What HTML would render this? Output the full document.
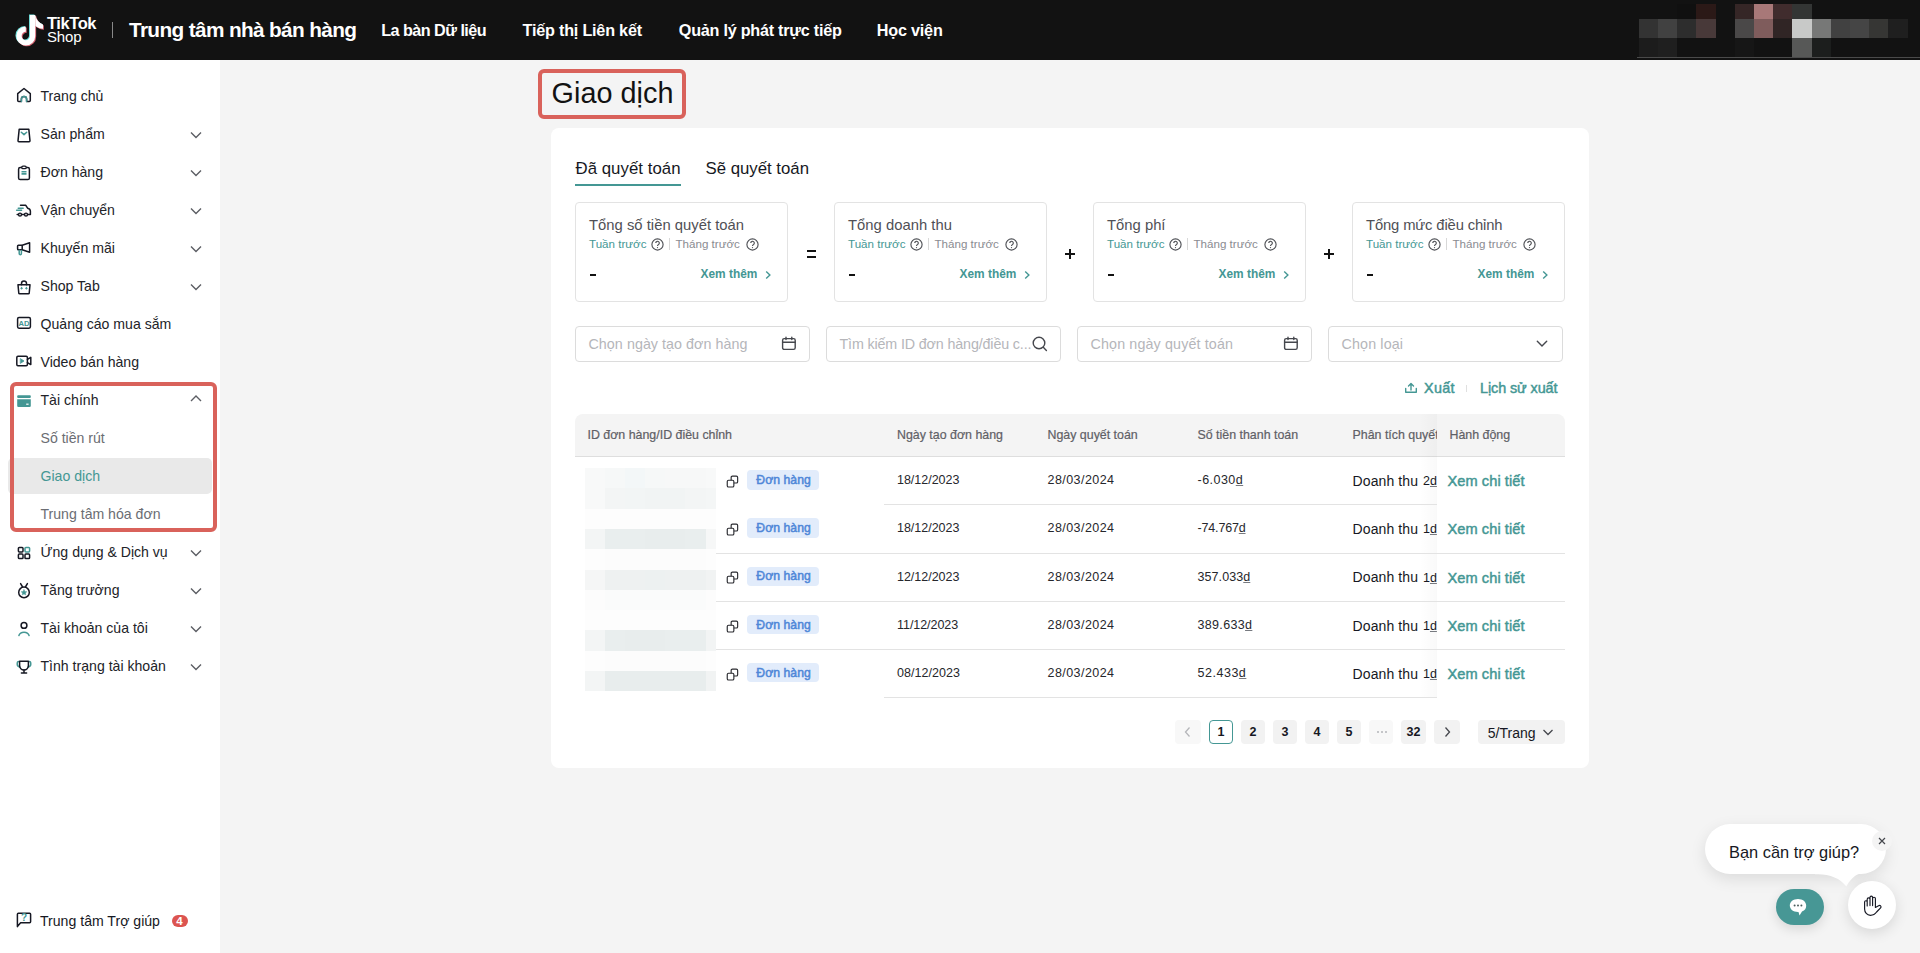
<!DOCTYPE html><html><head><meta charset="utf-8"><style>
html,body{margin:0;padding:0;width:1920px;height:953px;overflow:hidden;background:#f4f4f4;font-family:"Liberation Sans",sans-serif}
.t{position:absolute;white-space:nowrap;line-height:1}
.r{position:absolute}
svg.r{overflow:visible}
</style></head><body>
<div class="r" style="left:0px;top:0px;width:1920px;height:60px;background:#121212"></div>
<svg class="r" style="left:0.3px;top:0.8px" width="60" height="60" viewBox="0 0 60 60">
<defs><g id="tkn"><path d="M32.6 14 V35 A6.8 6.8 0 1 1 25.8 28.2" fill="none" stroke-width="5.3"/><path d="M35.2 14 C36.3 18.5 39 22 43 23.6 V27.8 C40.2 27.6 37.6 26.6 35.4 25 Z" stroke="none"/></g></defs>
<use href="#tkn" stroke="#6fe3df" fill="#6fe3df" transform="translate(-0.9,-0.6)"/>
<use href="#tkn" stroke="#d0606e" fill="#d0606e" transform="translate(0.9,0.9)"/>
<use href="#tkn" stroke="#fff" fill="#fff"/>
</svg>
<div class="t" style="left:47px;top:14.93px;font-size:16.5px;font-weight:700;color:#fff;letter-spacing:-0.431px;">TikTok</div>
<div class="t" style="left:47px;top:29.20px;font-size:15px;font-weight:400;color:#fff;letter-spacing:-0.182px;">Shop</div>
<div class="r" style="left:112px;top:22px;width:1px;height:16px;background:#888"></div>
<div class="t" style="left:129px;top:19.69px;font-size:20.8px;font-weight:700;color:#fff;letter-spacing:-0.642px;">Trung tâm nhà bán hàng</div>
<div class="t" style="left:381.2px;top:22.29px;font-size:16.2px;font-weight:700;color:#fff;letter-spacing:-0.536px;">La bàn Dữ liệu</div>
<div class="t" style="left:522.6px;top:22.29px;font-size:16.2px;font-weight:700;color:#fff;letter-spacing:-0.215px;">Tiếp thị Liên kết</div>
<div class="t" style="left:678.8px;top:22.29px;font-size:16.2px;font-weight:700;color:#fff;letter-spacing:-0.249px;">Quản lý phát trực tiếp</div>
<div class="t" style="left:876.8px;top:22.29px;font-size:16.2px;font-weight:700;color:#fff;letter-spacing:-0.212px;">Học viện</div>
<div class="r" style="left:1677.2px;top:4px;width:19.3px;height:15px;background:#101010"></div>
<div class="r" style="left:1696.3px;top:4px;width:19.3px;height:15px;background:#2b1917"></div>
<div class="r" style="left:1734.8px;top:4px;width:19.3px;height:15px;background:#352626"></div>
<div class="r" style="left:1754.0px;top:4px;width:19.3px;height:15px;background:#a87878"></div>
<div class="r" style="left:1773.2px;top:4px;width:19.3px;height:15px;background:#402c2d"></div>
<div class="r" style="left:1792.3px;top:4px;width:19.3px;height:15px;background:#333534"></div>
<div class="r" style="left:1638.8px;top:19px;width:19.3px;height:19px;background:#333333"></div>
<div class="r" style="left:1658.0px;top:19px;width:19.3px;height:19px;background:#414141"></div>
<div class="r" style="left:1677.2px;top:19px;width:19.3px;height:19px;background:#2d2d2d"></div>
<div class="r" style="left:1696.3px;top:19px;width:19.3px;height:19px;background:#483939"></div>
<div class="r" style="left:1734.8px;top:19px;width:19.3px;height:19px;background:#4a4848"></div>
<div class="r" style="left:1754.0px;top:19px;width:19.3px;height:19px;background:#7f5c5c"></div>
<div class="r" style="left:1773.2px;top:19px;width:19.3px;height:19px;background:#302525"></div>
<div class="r" style="left:1792.3px;top:19px;width:19.3px;height:19px;background:#c8c9c8"></div>
<div class="r" style="left:1811.5px;top:19px;width:19.3px;height:19px;background:#777877"></div>
<div class="r" style="left:1830.8px;top:19px;width:19.3px;height:19px;background:#414141"></div>
<div class="r" style="left:1850.0px;top:19px;width:19.3px;height:19px;background:#454545"></div>
<div class="r" style="left:1869.2px;top:19px;width:19.3px;height:19px;background:#363634"></div>
<div class="r" style="left:1888.3px;top:19px;width:19.3px;height:19px;background:#1f1f1f"></div>
<div class="r" style="left:1638.8px;top:38px;width:19.3px;height:19px;background:#1c1c1c"></div>
<div class="r" style="left:1658.0px;top:38px;width:19.3px;height:19px;background:#1f1f1f"></div>
<div class="r" style="left:1734.8px;top:38px;width:19.3px;height:19px;background:#161616"></div>
<div class="r" style="left:1792.3px;top:38px;width:19.3px;height:19px;background:#575857"></div>
<div class="r" style="left:1811.5px;top:38px;width:19.3px;height:19px;background:#1c1e1d"></div>
<div class="r" style="left:1637px;top:57px;width:283px;height:1px;background:#4a4a4a"></div>
<div class="r" style="left:0px;top:60px;width:220px;height:893px;background:#fff"></div>
<!--SIDEBAR-->
<div class="r" style="left:8px;top:458px;width:203.5px;height:36px;background:#e9e9e9;border-radius:5px"></div>
<div class="t" style="left:40.5px;top:89.46px;font-size:14.1px;font-weight:400;color:#222328;">Trang chủ</div>
<div class="t" style="left:40.5px;top:127.46px;font-size:14.1px;font-weight:400;color:#222328;">Sản phẩm</div>
<svg class="r" style="left:189px;top:131.4px" width="14" height="9" viewBox="0 0 14 9"><path d="M2 1.5 L7 6.5 L12 1.5" fill="none" stroke="#5c5e64" stroke-width="1.4"/></svg>
<div class="t" style="left:40.5px;top:165.46px;font-size:14.1px;font-weight:400;color:#222328;">Đơn hàng</div>
<svg class="r" style="left:189px;top:169.4px" width="14" height="9" viewBox="0 0 14 9"><path d="M2 1.5 L7 6.5 L12 1.5" fill="none" stroke="#5c5e64" stroke-width="1.4"/></svg>
<div class="t" style="left:40.5px;top:203.46px;font-size:14.1px;font-weight:400;color:#222328;">Vận chuyển</div>
<svg class="r" style="left:189px;top:207.4px" width="14" height="9" viewBox="0 0 14 9"><path d="M2 1.5 L7 6.5 L12 1.5" fill="none" stroke="#5c5e64" stroke-width="1.4"/></svg>
<div class="t" style="left:40.5px;top:241.46px;font-size:14.1px;font-weight:400;color:#222328;">Khuyến mãi</div>
<svg class="r" style="left:189px;top:245.4px" width="14" height="9" viewBox="0 0 14 9"><path d="M2 1.5 L7 6.5 L12 1.5" fill="none" stroke="#5c5e64" stroke-width="1.4"/></svg>
<div class="t" style="left:40.5px;top:279.46px;font-size:14.1px;font-weight:400;color:#222328;">Shop Tab</div>
<svg class="r" style="left:189px;top:283.4px" width="14" height="9" viewBox="0 0 14 9"><path d="M2 1.5 L7 6.5 L12 1.5" fill="none" stroke="#5c5e64" stroke-width="1.4"/></svg>
<div class="t" style="left:40.5px;top:317.46px;font-size:14.1px;font-weight:400;color:#222328;">Quảng cáo mua sắm</div>
<div class="t" style="left:40.5px;top:355.46px;font-size:14.1px;font-weight:400;color:#222328;">Video bán hàng</div>
<div class="t" style="left:40.5px;top:393.46px;font-size:14.1px;font-weight:400;color:#222328;">Tài chính</div>
<svg class="r" style="left:189px;top:394.4px" width="14" height="9" viewBox="0 0 14 9"><path d="M2 7 L7 2 L12 7" fill="none" stroke="#5c5e64" stroke-width="1.4"/></svg>
<div class="t" style="left:40.5px;top:431.46px;font-size:14.1px;font-weight:400;color:#6b6d73;">Số tiền rút</div>
<div class="t" style="left:40.5px;top:469.46px;font-size:14.1px;font-weight:400;color:#449794;">Giao dịch</div>
<div class="t" style="left:40.5px;top:507.46px;font-size:14.1px;font-weight:400;color:#6b6d73;">Trung tâm hóa đơn</div>
<div class="t" style="left:40.5px;top:545.46px;font-size:14.1px;font-weight:400;color:#222328;">Ứng dụng &amp; Dịch vụ</div>
<svg class="r" style="left:189px;top:549.4px" width="14" height="9" viewBox="0 0 14 9"><path d="M2 1.5 L7 6.5 L12 1.5" fill="none" stroke="#5c5e64" stroke-width="1.4"/></svg>
<div class="t" style="left:40.5px;top:583.46px;font-size:14.1px;font-weight:400;color:#222328;">Tăng trưởng</div>
<svg class="r" style="left:189px;top:587.4px" width="14" height="9" viewBox="0 0 14 9"><path d="M2 1.5 L7 6.5 L12 1.5" fill="none" stroke="#5c5e64" stroke-width="1.4"/></svg>
<div class="t" style="left:40.5px;top:621.46px;font-size:14.1px;font-weight:400;color:#222328;">Tài khoản của tôi</div>
<svg class="r" style="left:189px;top:625.4px" width="14" height="9" viewBox="0 0 14 9"><path d="M2 1.5 L7 6.5 L12 1.5" fill="none" stroke="#5c5e64" stroke-width="1.4"/></svg>
<div class="t" style="left:40.5px;top:659.46px;font-size:14.1px;font-weight:400;color:#222328;">Tình trạng tài khoản</div>
<svg class="r" style="left:189px;top:663.4px" width="14" height="9" viewBox="0 0 14 9"><path d="M2 1.5 L7 6.5 L12 1.5" fill="none" stroke="#5c5e64" stroke-width="1.4"/></svg>
<svg class="r" style="left:16px;top:87px" width="16" height="16" viewBox="0 0 16 16" fill="none" stroke-linecap="round" stroke-linejoin="round"><path d="M1.7 6.6 L8 1.5 L14.3 6.6 V13.6 a1 1 0 0 1 -1 1 H10.6 V12 a2.6 2.6 0 0 0 -5.2 0 V14.6 H2.7 a1 1 0 0 1 -1 -1 Z" stroke="#161823" stroke-width="1.5"/><path d="M5.4 14.6 V12 a2.6 2.6 0 0 1 5.2 0 V14.6" stroke="#449794" stroke-width="1.5"/></svg>
<svg class="r" style="left:16px;top:127px" width="16" height="16" viewBox="0 0 16 16" fill="none" stroke-linecap="round" stroke-linejoin="round"><path d="M3.2 2.2 H12.8 L14 13.8 a0.9 0.9 0 0 1 -0.9 0.9 H2.9 a0.9 0.9 0 0 1 -0.9 -0.9 Z" stroke="#161823" stroke-width="1.5"/><path d="M5.3 5.2 L8 7.6 L10.7 5.2" stroke="#449794" stroke-width="1.5"/></svg>
<svg class="r" style="left:16px;top:165px" width="16" height="16" viewBox="0 0 16 16" fill="none" stroke-linecap="round" stroke-linejoin="round"><rect x="2.6" y="2.6" width="10.8" height="12" rx="1.6" stroke="#161823" stroke-width="1.5"/><rect x="5.8" y="1.2" width="4.4" height="2.4" rx="1.2" fill="#fff" stroke="#161823" stroke-width="1.3"/><path d="M5.5 6.8 H10.5 M5.5 8.9 H10.5" stroke="#449794" stroke-width="1.6" stroke-linecap="butt"/></svg>
<svg class="r" style="left:15px;top:203px" width="17" height="15" viewBox="0 0 17 15" fill="none" stroke-linecap="round" stroke-linejoin="round"><path d="M5.5 2.3 H10.8 L12.6 5.2 C14.4 5.6 15.4 6.6 15.4 8.2 V11.4 H12.7 M9.4 11.4 H6.7" stroke="#161823" stroke-width="1.5"/><path d="M3.4 11.4 H2.2" stroke="#161823" stroke-width="1.5"/><circle cx="5" cy="11.6" r="1.5" stroke="#161823" stroke-width="1.4"/><circle cx="11" cy="11.6" r="1.5" stroke="#161823" stroke-width="1.4"/><path d="M3.2 5.2 H8.2 M1.6 7.2 H6.6" stroke="#449794" stroke-width="1.4"/></svg>
<svg class="r" style="left:16px;top:241px" width="16" height="16" viewBox="0 0 16 16" fill="none" stroke-linecap="round" stroke-linejoin="round"><rect x="1.6" y="4.2" width="4.6" height="4.6" rx="0.8" stroke="#161823" stroke-width="1.5"/><path d="M6.2 4.2 L13.6 1.8 V11.2 L6.2 8.8" stroke="#161823" stroke-width="1.5"/><path d="M3.2 9.2 V12.6 a1.1 1.1 0 0 0 2.2 0 V9.4" stroke="#449794" stroke-width="1.5"/></svg>
<svg class="r" style="left:16px;top:279px" width="16" height="16" viewBox="0 0 16 16" fill="none" stroke-linecap="round" stroke-linejoin="round"><path d="M2 5.8 H14 L13.2 14.2 a0.8 0.8 0 0 1 -0.8 0.6 H3.6 a0.8 0.8 0 0 1 -0.8 -0.6 Z" stroke="#161823" stroke-width="1.5"/><path d="M5.5 5.8 V4.4 a2.5 2.5 0 0 1 5 0 V5.8" stroke="#161823" stroke-width="1.5"/><path d="M4.8 9.2 H6.4 M5.6 8.4 V10 M9.6 9.2 H11.2 M10.4 8.4 V10" stroke="#449794" stroke-width="1.1"/></svg>
<svg class="r" style="left:16px;top:316px" width="16" height="14" viewBox="0 0 16 14" fill="none" stroke-linecap="round" stroke-linejoin="round"><rect x="1.6" y="1.6" width="12.8" height="10.6" rx="1.4" stroke="#161823" stroke-width="1.5"/><text x="8" y="10.3" text-anchor="middle" font-family="Liberation Sans" font-weight="700" font-size="7.6" fill="#449794" stroke="none">AD</text></svg>
<svg class="r" style="left:15px;top:354px" width="18" height="14" viewBox="0 0 18 14" fill="none" stroke-linecap="round" stroke-linejoin="round"><rect x="1.8" y="2.2" width="10.6" height="9.6" rx="1.2" stroke="#161823" stroke-width="1.5"/><path d="M12.4 5.4 L15.8 3.4 V10.6 L12.4 8.6" stroke="#161823" stroke-width="1.5"/><path d="M5.6 4.8 L9 7 L5.6 9.2 Z" fill="#449794" stroke="#449794" stroke-width="0.8"/></svg>
<svg class="r" style="left:16px;top:394px" width="16" height="14" viewBox="0 0 16 14" fill="none" stroke-linecap="round" stroke-linejoin="round"><rect x="1.2" y="1.2" width="13.6" height="2.8" rx="0.9" fill="#449794"/><path d="M1.2 5.2 H14.8 V11.8 a1.2 1.2 0 0 1 -1.2 1.2 H2.4 a1.2 1.2 0 0 1 -1.2 -1.2 Z" fill="#449794"/><path d="M10.2 10.2 H12.6" stroke="#fff" stroke-width="1.2" stroke-linecap="butt"/></svg>
<svg class="r" style="left:16px;top:545px" width="16" height="16" viewBox="0 0 16 16" fill="none" stroke-linecap="round" stroke-linejoin="round"><rect x="2.4" y="2.4" width="4.6" height="4.6" rx="0.9" stroke="#161823" stroke-width="1.5"/><rect x="9" y="2.4" width="4.6" height="4.6" rx="0.9" stroke="#449794" stroke-width="1.5"/><rect x="2.4" y="9" width="4.6" height="4.6" rx="0.9" stroke="#161823" stroke-width="1.5"/><rect x="9" y="9" width="4.6" height="4.6" rx="0.9" stroke="#161823" stroke-width="1.5"/></svg>
<svg class="r" style="left:16px;top:582px" width="16" height="17" viewBox="0 0 16 17" fill="none" stroke-linecap="round" stroke-linejoin="round"><circle cx="8" cy="10.4" r="5.3" stroke="#161823" stroke-width="1.5"/><path d="M4.6 1.6 L6.6 5 M11.4 1.6 L9.4 5" stroke="#161823" stroke-width="1.5"/><path d="M8 7.6 L8.9 9.5 L10.9 9.7 L9.4 11 L9.8 13 L8 12 L6.2 13 L6.6 11 L5.1 9.7 L7.1 9.5 Z" fill="#449794" stroke="#449794" stroke-width="0.4"/></svg>
<svg class="r" style="left:16px;top:621px" width="16" height="16" viewBox="0 0 16 16" fill="none" stroke-linecap="round" stroke-linejoin="round"><circle cx="8" cy="4.4" r="2.9" stroke="#161823" stroke-width="1.5"/><path d="M2.9 14.6 a5.3 4.6 0 0 1 10.2 0" stroke="#449794" stroke-width="1.5"/></svg>
<svg class="r" style="left:16px;top:659px" width="16" height="16" viewBox="0 0 16 16" fill="none" stroke-linecap="round" stroke-linejoin="round"><path d="M2.6 2.6 C1.4 2.6 1.2 3.6 1.2 5 C1.2 6.4 1.6 7.6 3.8 8 M13.4 2.6 C14.6 2.6 14.8 3.6 14.8 5 C14.8 6.4 14.4 7.6 12.2 8" stroke="#449794" stroke-width="1.5"/><path d="M3.6 2.2 H12.4 V6.6 a4.4 4.4 0 0 1 -8.8 0 Z" stroke="#161823" stroke-width="1.5"/><path d="M8 11 V13.6 M5.4 14 H10.6" stroke="#161823" stroke-width="1.5"/></svg>
<svg class="r" style="left:16px;top:912px" width="16" height="16" viewBox="0 0 16 16" fill="none" stroke-linecap="round" stroke-linejoin="round"><path d="M1.4 14.6 V2.2 a1 1 0 0 1 1 -1 H13.6 a1 1 0 0 1 1 1 V9.8 a1 1 0 0 1 -1 1 H4.6 Z" stroke="#161823" stroke-width="1.5"/><text x="8" y="8.8" text-anchor="middle" font-family="Liberation Sans" font-weight="700" font-size="10" fill="#449794" stroke="none">?</text></svg>
<div class="r" style="left:10px;top:382px;width:207px;height:150px;border:4px solid #d9625b;border-radius:6px;box-sizing:border-box"></div>
<!--HELP-->
<div class="t" style="left:40px;top:914.06px;font-size:14.1px;font-weight:400;color:#161823;">Trung tâm Trợ giúp</div>
<div class="r" style="left:172px;top:915px;width:16px;height:12px;background:#dc5450;border-radius:6px"></div>
<div class="t" style="left:176.2px;top:915.57px;font-size:11.5px;font-weight:700;color:#fff;">4</div>
<div class="r" style="left:220px;top:60px;width:1700px;height:893px;background:#f4f4f4"></div>
<div class="r" style="left:538px;top:69px;width:148px;height:50px;border:4px solid #d9625b;border-radius:6px;box-sizing:border-box"></div>
<div class="t" style="left:551.5px;top:78.62px;font-size:28.8px;font-weight:400;color:#121212;letter-spacing:0.043px;">Giao dịch</div>
<div class="r" style="left:551px;top:128px;width:1038px;height:640px;background:#fff;border-radius:8px"></div>
<div class="t" style="left:575.5px;top:161.28px;font-size:16.8px;font-weight:400;color:#161823;letter-spacing:0.042px;">Đã quyết toán</div>
<div class="t" style="left:705.5px;top:161.28px;font-size:16.8px;font-weight:400;color:#161823;letter-spacing:-0.007px;">Sẽ quyết toán</div>
<div class="r" style="left:575px;top:184px;width:106px;height:2px;background:#449794"></div>
<div class="r" style="left:575px;top:202px;width:213px;height:100px;border:1px solid #e3e3e3;border-radius:4px;box-sizing:border-box"></div>
<div class="t" style="left:589px;top:218.07px;font-size:14.8px;font-weight:400;color:#4f5056;letter-spacing:0.016px;">Tổng số tiền quyết toán</div>
<div class="t" style="left:589px;top:237.88px;font-size:11.6px;font-weight:400;color:#449794;">Tuần trước</div>
<svg class="r" style="left:651px;top:237.5px" width="13" height="13" viewBox="0 0 13 13"><circle cx="6.5" cy="6.5" r="5.6" fill="none" stroke="#505257" stroke-width="1.15"/><path d="M4.7 5.1 a1.8 1.8 0 1 1 2.6 1.6 c-.6.3-.8.6-.8 1.3" fill="none" stroke="#505257" stroke-width="1.15"/><circle cx="6.5" cy="9.6" r=".65" fill="#505257"/></svg>
<div class="r" style="left:669px;top:238px;width:1px;height:12px;background:#d8d8d8"></div>
<div class="t" style="left:675.5px;top:237.88px;font-size:11.6px;font-weight:400;color:#8a8b91;">Tháng trước</div>
<svg class="r" style="left:746px;top:237.5px" width="13" height="13" viewBox="0 0 13 13"><circle cx="6.5" cy="6.5" r="5.6" fill="none" stroke="#505257" stroke-width="1.15"/><path d="M4.7 5.1 a1.8 1.8 0 1 1 2.6 1.6 c-.6.3-.8.6-.8 1.3" fill="none" stroke="#505257" stroke-width="1.15"/><circle cx="6.5" cy="9.6" r=".65" fill="#505257"/></svg>
<div class="r" style="left:589.5px;top:273.5px;width:6px;height:2.2px;background:#121212"></div>
<div class="t" style="left:700.5px;top:268.63px;font-size:11.9px;font-weight:700;color:#449794;">Xem thêm</div>
<svg class="r" style="left:764px;top:269.5px" width="8" height="11" viewBox="0 0 8 11"><path d="M2.2 1.4 L5.9 5 L2.2 8.6" fill="none" stroke="#449794" stroke-width="1.4"/></svg>
<div class="r" style="left:834px;top:202px;width:213px;height:100px;border:1px solid #e3e3e3;border-radius:4px;box-sizing:border-box"></div>
<div class="t" style="left:848px;top:218.07px;font-size:14.8px;font-weight:400;color:#4f5056;letter-spacing:0.025px;">Tổng doanh thu</div>
<div class="t" style="left:848px;top:237.88px;font-size:11.6px;font-weight:400;color:#449794;">Tuần trước</div>
<svg class="r" style="left:910px;top:237.5px" width="13" height="13" viewBox="0 0 13 13"><circle cx="6.5" cy="6.5" r="5.6" fill="none" stroke="#505257" stroke-width="1.15"/><path d="M4.7 5.1 a1.8 1.8 0 1 1 2.6 1.6 c-.6.3-.8.6-.8 1.3" fill="none" stroke="#505257" stroke-width="1.15"/><circle cx="6.5" cy="9.6" r=".65" fill="#505257"/></svg>
<div class="r" style="left:928px;top:238px;width:1px;height:12px;background:#d8d8d8"></div>
<div class="t" style="left:934.5px;top:237.88px;font-size:11.6px;font-weight:400;color:#8a8b91;">Tháng trước</div>
<svg class="r" style="left:1005px;top:237.5px" width="13" height="13" viewBox="0 0 13 13"><circle cx="6.5" cy="6.5" r="5.6" fill="none" stroke="#505257" stroke-width="1.15"/><path d="M4.7 5.1 a1.8 1.8 0 1 1 2.6 1.6 c-.6.3-.8.6-.8 1.3" fill="none" stroke="#505257" stroke-width="1.15"/><circle cx="6.5" cy="9.6" r=".65" fill="#505257"/></svg>
<div class="r" style="left:848.5px;top:273.5px;width:6px;height:2.2px;background:#121212"></div>
<div class="t" style="left:959.5px;top:268.63px;font-size:11.9px;font-weight:700;color:#449794;">Xem thêm</div>
<svg class="r" style="left:1023px;top:269.5px" width="8" height="11" viewBox="0 0 8 11"><path d="M2.2 1.4 L5.9 5 L2.2 8.6" fill="none" stroke="#449794" stroke-width="1.4"/></svg>
<div class="r" style="left:1093px;top:202px;width:213px;height:100px;border:1px solid #e3e3e3;border-radius:4px;box-sizing:border-box"></div>
<div class="t" style="left:1107px;top:218.07px;font-size:14.8px;font-weight:400;color:#4f5056;letter-spacing:0.011px;">Tổng phí</div>
<div class="t" style="left:1107px;top:237.88px;font-size:11.6px;font-weight:400;color:#449794;">Tuần trước</div>
<svg class="r" style="left:1169px;top:237.5px" width="13" height="13" viewBox="0 0 13 13"><circle cx="6.5" cy="6.5" r="5.6" fill="none" stroke="#505257" stroke-width="1.15"/><path d="M4.7 5.1 a1.8 1.8 0 1 1 2.6 1.6 c-.6.3-.8.6-.8 1.3" fill="none" stroke="#505257" stroke-width="1.15"/><circle cx="6.5" cy="9.6" r=".65" fill="#505257"/></svg>
<div class="r" style="left:1187px;top:238px;width:1px;height:12px;background:#d8d8d8"></div>
<div class="t" style="left:1193.5px;top:237.88px;font-size:11.6px;font-weight:400;color:#8a8b91;">Tháng trước</div>
<svg class="r" style="left:1264px;top:237.5px" width="13" height="13" viewBox="0 0 13 13"><circle cx="6.5" cy="6.5" r="5.6" fill="none" stroke="#505257" stroke-width="1.15"/><path d="M4.7 5.1 a1.8 1.8 0 1 1 2.6 1.6 c-.6.3-.8.6-.8 1.3" fill="none" stroke="#505257" stroke-width="1.15"/><circle cx="6.5" cy="9.6" r=".65" fill="#505257"/></svg>
<div class="r" style="left:1107.5px;top:273.5px;width:6px;height:2.2px;background:#121212"></div>
<div class="t" style="left:1218.5px;top:268.63px;font-size:11.9px;font-weight:700;color:#449794;">Xem thêm</div>
<svg class="r" style="left:1282px;top:269.5px" width="8" height="11" viewBox="0 0 8 11"><path d="M2.2 1.4 L5.9 5 L2.2 8.6" fill="none" stroke="#449794" stroke-width="1.4"/></svg>
<div class="r" style="left:1352px;top:202px;width:213px;height:100px;border:1px solid #e3e3e3;border-radius:4px;box-sizing:border-box"></div>
<div class="t" style="left:1366px;top:218.07px;font-size:14.8px;font-weight:400;color:#4f5056;letter-spacing:-0.141px;">Tổng mức điều chỉnh</div>
<div class="t" style="left:1366px;top:237.88px;font-size:11.6px;font-weight:400;color:#449794;">Tuần trước</div>
<svg class="r" style="left:1428px;top:237.5px" width="13" height="13" viewBox="0 0 13 13"><circle cx="6.5" cy="6.5" r="5.6" fill="none" stroke="#505257" stroke-width="1.15"/><path d="M4.7 5.1 a1.8 1.8 0 1 1 2.6 1.6 c-.6.3-.8.6-.8 1.3" fill="none" stroke="#505257" stroke-width="1.15"/><circle cx="6.5" cy="9.6" r=".65" fill="#505257"/></svg>
<div class="r" style="left:1446px;top:238px;width:1px;height:12px;background:#d8d8d8"></div>
<div class="t" style="left:1452.5px;top:237.88px;font-size:11.6px;font-weight:400;color:#8a8b91;">Tháng trước</div>
<svg class="r" style="left:1523px;top:237.5px" width="13" height="13" viewBox="0 0 13 13"><circle cx="6.5" cy="6.5" r="5.6" fill="none" stroke="#505257" stroke-width="1.15"/><path d="M4.7 5.1 a1.8 1.8 0 1 1 2.6 1.6 c-.6.3-.8.6-.8 1.3" fill="none" stroke="#505257" stroke-width="1.15"/><circle cx="6.5" cy="9.6" r=".65" fill="#505257"/></svg>
<div class="r" style="left:1366.5px;top:273.5px;width:6px;height:2.2px;background:#121212"></div>
<div class="t" style="left:1477.5px;top:268.63px;font-size:11.9px;font-weight:700;color:#449794;">Xem thêm</div>
<svg class="r" style="left:1541px;top:269.5px" width="8" height="11" viewBox="0 0 8 11"><path d="M2.2 1.4 L5.9 5 L2.2 8.6" fill="none" stroke="#449794" stroke-width="1.4"/></svg>
<div class="r" style="left:806.5px;top:250px;width:9px;height:2.2px;background:#121212"></div><div class="r" style="left:806.5px;top:255.5px;width:9px;height:2.2px;background:#121212"></div>
<div class="r" style="left:1065px;top:253px;width:10px;height:2px;background:#121212"></div>
<div class="r" style="left:1069px;top:249px;width:2px;height:10px;background:#121212"></div>
<div class="r" style="left:1324px;top:253px;width:10px;height:2px;background:#121212"></div>
<div class="r" style="left:1328px;top:249px;width:2px;height:10px;background:#121212"></div>
<div class="r" style="left:575px;top:326px;width:235px;height:36px;border:1px solid #dcdcdc;border-radius:4px;box-sizing:border-box"></div>
<div class="t" style="left:588.5px;top:336.70px;font-size:14.3px;font-weight:400;color:#b5b6ba;letter-spacing:0.046px;">Chọn ngày tạo đơn hàng</div>
<div class="r" style="left:826px;top:326px;width:235px;height:36px;border:1px solid #dcdcdc;border-radius:4px;box-sizing:border-box"></div>
<div class="t" style="left:839.5px;top:336.70px;font-size:14.3px;font-weight:400;color:#b5b6ba;letter-spacing:-0.142px;">Tìm kiếm ID đơn hàng/điều c...</div>
<div class="r" style="left:1077px;top:326px;width:235px;height:36px;border:1px solid #dcdcdc;border-radius:4px;box-sizing:border-box"></div>
<div class="t" style="left:1090.5px;top:336.70px;font-size:14.3px;font-weight:400;color:#b5b6ba;letter-spacing:0.137px;">Chọn ngày quyết toán</div>
<div class="r" style="left:1328px;top:326px;width:235px;height:36px;border:1px solid #dcdcdc;border-radius:4px;box-sizing:border-box"></div>
<div class="t" style="left:1341.5px;top:336.70px;font-size:14.3px;font-weight:400;color:#b5b6ba;letter-spacing:0.137px;">Chọn loại</div>
<svg class="r" style="left:781px;top:336px" width="16" height="15" viewBox="0 0 16 15" fill="none" stroke-linecap="round" stroke-linejoin="round"><rect x="1.6" y="2.6" width="12.6" height="10.8" rx="1.6" stroke="#45474d" stroke-width="1.4"/><path d="M1.6 6.2 H14.2 M5 1.2 V3.6 M10.8 1.2 V3.6" stroke="#45474d" stroke-width="1.4"/></svg>
<svg class="r" style="left:1283px;top:336px" width="16" height="15" viewBox="0 0 16 15" fill="none" stroke-linecap="round" stroke-linejoin="round"><rect x="1.6" y="2.6" width="12.6" height="10.8" rx="1.6" stroke="#45474d" stroke-width="1.4"/><path d="M1.6 6.2 H14.2 M5 1.2 V3.6 M10.8 1.2 V3.6" stroke="#45474d" stroke-width="1.4"/></svg>
<svg class="r" style="left:1031px;top:335px" width="18" height="18" viewBox="0 0 18 18" fill="none" stroke-linecap="round" stroke-linejoin="round"><circle cx="8" cy="8" r="5.8" stroke="#45474d" stroke-width="1.4"/><path d="M12.3 12.3 L15.4 15.4" stroke="#45474d" stroke-width="1.4"/></svg>
<svg class="r" style="left:1535px;top:339px" width="14" height="10" viewBox="0 0 14 10" fill="none" stroke-linecap="round" stroke-linejoin="round"><path d="M2.3 2.3 L7 7 L11.7 2.3" stroke="#45474d" stroke-width="1.4"/></svg>
<svg class="r" style="left:1403px;top:381px" width="16" height="14" viewBox="0 0 16 14" fill="none" stroke-linecap="round" stroke-linejoin="round"><path d="M2.7 7.4 V11.3 H13.3 V7.4" stroke="#449794" stroke-width="1.4"/><path d="M8 9 V2.6 M5.5 5 L8 2.5 L10.5 5" stroke="#449794" stroke-width="1.4"/></svg>
<div class="t" style="left:1424px;top:380.51px;font-size:14.4px;font-weight:400;color:#449794;letter-spacing:0.297px;-webkit-text-stroke:0.45px #449794">Xuất</div>
<div class="r" style="left:1466px;top:385px;width:1px;height:7px;background:#e0e0e0"></div>
<div class="t" style="left:1480px;top:380.51px;font-size:14.4px;font-weight:400;color:#449794;letter-spacing:-0.085px;-webkit-text-stroke:0.45px #449794">Lịch sử xuất</div>
<div class="r" style="left:575px;top:414px;width:990px;height:43px;background:#f4f4f4;border-radius:8px 8px 0 0;border-bottom:1px solid #dedede;box-sizing:border-box"></div>
<div class="t" style="left:587.5px;top:429.00px;font-size:12.4px;font-weight:400;color:#5f6066;-webkit-text-stroke:0.2px #5f6066">ID đơn hàng/ID điều chỉnh</div>
<div class="t" style="left:897px;top:429.00px;font-size:12.4px;font-weight:400;color:#5f6066;-webkit-text-stroke:0.2px #5f6066">Ngày tạo đơn hàng</div>
<div class="t" style="left:1047.5px;top:429.00px;font-size:12.4px;font-weight:400;color:#5f6066;-webkit-text-stroke:0.2px #5f6066">Ngày quyết toán</div>
<div class="t" style="left:1197.5px;top:429.00px;font-size:12.4px;font-weight:400;color:#5f6066;-webkit-text-stroke:0.2px #5f6066">Số tiền thanh toán</div>
<div class="r" style="left:1352px;top:420px;width:85px;height:30px;overflow:hidden"><div class="t" style="left:0.5px;top:9.00px;font-size:12.4px;color:#5f6066;-webkit-text-stroke:0.2px #5f6066">Phân tích quyết toán</div></div>
<div class="t" style="left:1449.5px;top:429.00px;font-size:12.4px;font-weight:400;color:#5f6066;-webkit-text-stroke:0.2px #5f6066">Hành động</div>
<div class="r" style="left:1420px;top:414px;width:17px;height:284px;background:linear-gradient(to right,rgba(0,0,0,0),rgba(0,0,0,0.025))"></div>
<div class="r" style="left:884px;top:504px;width:553px;height:1px;background:#e3e3e3"></div>
<svg class="r" style="left:725.5px;top:474.7px" width="13" height="13" viewBox="0 0 13 13"><rect x="5.15" y="1.15" width="6.5" height="6.8" rx="1.3" fill="none" stroke="#2a2b30" stroke-width="1.15"/><rect x="1.25" y="5.25" width="6.6" height="6.7" rx="1.3" fill="#fff" stroke="#2a2b30" stroke-width="1.15"/></svg>
<div class="r" style="left:747px;top:470.0px;width:72px;height:19.7px;background:#e2ecfb;border-radius:4px"></div>
<div class="t" style="left:756.3px;top:473.87px;font-size:12.2px;font-weight:400;color:#4f87d8;letter-spacing:0.060px;-webkit-text-stroke:0.5px #4f87d8">Đơn hàng</div>
<div class="t" style="left:897px;top:474.22px;font-size:12.5px;font-weight:400;color:#26272c;letter-spacing:-0.018px;">18/12/2023</div>
<div class="t" style="left:1047.5px;top:474.22px;font-size:12.5px;font-weight:400;color:#26272c;letter-spacing:0.438px;">28/03/2024</div>
<div class="t" style="left:1197.5px;top:474.22px;font-size:12.5px;font-weight:400;color:#26272c;letter-spacing:0.466px;">-6.030<span style="text-decoration:underline;text-underline-offset:0.5px;text-decoration-color:#777a80">d</span></div>
<div class="r" style="left:1352px;top:462px;width:85px;height:38px;overflow:hidden"><div class="t" style="left:0.5px;top:11.95px;font-size:14px;color:#161823;letter-spacing:0.12px">Doanh thu</div><div class="t" style="left:71px;top:13.22px;font-size:12.5px;color:#161823">2<span style="text-decoration:underline;text-underline-offset:0.5px;text-decoration-color:#777a80">d</span></div></div>
<div class="t" style="left:1447.5px;top:474.34px;font-size:14.6px;font-weight:400;color:#449794;letter-spacing:0.068px;-webkit-text-stroke:0.45px #449794">Xem chi tiết</div>
<div class="r" style="left:716px;top:553px;width:849px;height:1px;background:#e3e3e3"></div>
<svg class="r" style="left:725.5px;top:522.7px" width="13" height="13" viewBox="0 0 13 13"><rect x="5.15" y="1.15" width="6.5" height="6.8" rx="1.3" fill="none" stroke="#2a2b30" stroke-width="1.15"/><rect x="1.25" y="5.25" width="6.6" height="6.7" rx="1.3" fill="#fff" stroke="#2a2b30" stroke-width="1.15"/></svg>
<div class="r" style="left:747px;top:518.0px;width:72px;height:19.7px;background:#e2ecfb;border-radius:4px"></div>
<div class="t" style="left:756.3px;top:521.87px;font-size:12.2px;font-weight:400;color:#4f87d8;letter-spacing:0.060px;-webkit-text-stroke:0.5px #4f87d8">Đơn hàng</div>
<div class="t" style="left:897px;top:522.22px;font-size:12.5px;font-weight:400;color:#26272c;letter-spacing:-0.018px;">18/12/2023</div>
<div class="t" style="left:1047.5px;top:522.22px;font-size:12.5px;font-weight:400;color:#26272c;letter-spacing:0.438px;">28/03/2024</div>
<div class="t" style="left:1197.5px;top:522.22px;font-size:12.5px;font-weight:400;color:#26272c;letter-spacing:-0.166px;">-74.767<span style="text-decoration:underline;text-underline-offset:0.5px;text-decoration-color:#777a80">d</span></div>
<div class="r" style="left:1352px;top:510px;width:85px;height:38px;overflow:hidden"><div class="t" style="left:0.5px;top:11.95px;font-size:14px;color:#161823;letter-spacing:0.12px">Doanh thu</div><div class="t" style="left:71px;top:13.22px;font-size:12.5px;color:#161823">1<span style="text-decoration:underline;text-underline-offset:0.5px;text-decoration-color:#777a80">d</span></div></div>
<div class="t" style="left:1447.5px;top:522.34px;font-size:14.6px;font-weight:400;color:#449794;letter-spacing:0.068px;-webkit-text-stroke:0.45px #449794">Xem chi tiết</div>
<div class="r" style="left:716px;top:601px;width:849px;height:1px;background:#e3e3e3"></div>
<svg class="r" style="left:725.5px;top:571.2px" width="13" height="13" viewBox="0 0 13 13"><rect x="5.15" y="1.15" width="6.5" height="6.8" rx="1.3" fill="none" stroke="#2a2b30" stroke-width="1.15"/><rect x="1.25" y="5.25" width="6.6" height="6.7" rx="1.3" fill="#fff" stroke="#2a2b30" stroke-width="1.15"/></svg>
<div class="r" style="left:747px;top:566.5px;width:72px;height:19.7px;background:#e2ecfb;border-radius:4px"></div>
<div class="t" style="left:756.3px;top:570.37px;font-size:12.2px;font-weight:400;color:#4f87d8;letter-spacing:0.060px;-webkit-text-stroke:0.5px #4f87d8">Đơn hàng</div>
<div class="t" style="left:897px;top:570.72px;font-size:12.5px;font-weight:400;color:#26272c;letter-spacing:-0.018px;">12/12/2023</div>
<div class="t" style="left:1047.5px;top:570.72px;font-size:12.5px;font-weight:400;color:#26272c;letter-spacing:0.438px;">28/03/2024</div>
<div class="t" style="left:1197.5px;top:570.72px;font-size:12.5px;font-weight:400;color:#26272c;letter-spacing:0.080px;">357.033<span style="text-decoration:underline;text-underline-offset:0.5px;text-decoration-color:#777a80">d</span></div>
<div class="r" style="left:1352px;top:559px;width:85px;height:38px;overflow:hidden"><div class="t" style="left:0.5px;top:11.45px;font-size:14px;color:#161823;letter-spacing:0.12px">Doanh thu</div><div class="t" style="left:71px;top:12.72px;font-size:12.5px;color:#161823">1<span style="text-decoration:underline;text-underline-offset:0.5px;text-decoration-color:#777a80">d</span></div></div>
<div class="t" style="left:1447.5px;top:570.84px;font-size:14.6px;font-weight:400;color:#449794;letter-spacing:0.068px;-webkit-text-stroke:0.45px #449794">Xem chi tiết</div>
<div class="r" style="left:716px;top:649px;width:849px;height:1px;background:#e3e3e3"></div>
<svg class="r" style="left:725.5px;top:619.5px" width="13" height="13" viewBox="0 0 13 13"><rect x="5.15" y="1.15" width="6.5" height="6.8" rx="1.3" fill="none" stroke="#2a2b30" stroke-width="1.15"/><rect x="1.25" y="5.25" width="6.6" height="6.7" rx="1.3" fill="#fff" stroke="#2a2b30" stroke-width="1.15"/></svg>
<div class="r" style="left:747px;top:614.8000000000001px;width:72px;height:19.7px;background:#e2ecfb;border-radius:4px"></div>
<div class="t" style="left:756.3px;top:618.67px;font-size:12.2px;font-weight:400;color:#4f87d8;letter-spacing:0.060px;-webkit-text-stroke:0.5px #4f87d8">Đơn hàng</div>
<div class="t" style="left:897px;top:619.02px;font-size:12.5px;font-weight:400;color:#26272c;letter-spacing:-0.049px;">11/12/2023</div>
<div class="t" style="left:1047.5px;top:619.02px;font-size:12.5px;font-weight:400;color:#26272c;letter-spacing:0.438px;">28/03/2024</div>
<div class="t" style="left:1197.5px;top:619.02px;font-size:12.5px;font-weight:400;color:#26272c;letter-spacing:0.337px;">389.633<span style="text-decoration:underline;text-underline-offset:0.5px;text-decoration-color:#777a80">d</span></div>
<div class="r" style="left:1352px;top:607px;width:85px;height:38px;overflow:hidden"><div class="t" style="left:0.5px;top:11.75px;font-size:14px;color:#161823;letter-spacing:0.12px">Doanh thu</div><div class="t" style="left:71px;top:13.02px;font-size:12.5px;color:#161823">1<span style="text-decoration:underline;text-underline-offset:0.5px;text-decoration-color:#777a80">d</span></div></div>
<div class="t" style="left:1447.5px;top:619.14px;font-size:14.6px;font-weight:400;color:#449794;letter-spacing:0.068px;-webkit-text-stroke:0.45px #449794">Xem chi tiết</div>
<div class="r" style="left:884px;top:697px;width:553px;height:1px;background:#e3e3e3"></div>
<svg class="r" style="left:725.5px;top:667.5px" width="13" height="13" viewBox="0 0 13 13"><rect x="5.15" y="1.15" width="6.5" height="6.8" rx="1.3" fill="none" stroke="#2a2b30" stroke-width="1.15"/><rect x="1.25" y="5.25" width="6.6" height="6.7" rx="1.3" fill="#fff" stroke="#2a2b30" stroke-width="1.15"/></svg>
<div class="r" style="left:747px;top:662.8000000000001px;width:72px;height:19.7px;background:#e2ecfb;border-radius:4px"></div>
<div class="t" style="left:756.3px;top:666.67px;font-size:12.2px;font-weight:400;color:#4f87d8;letter-spacing:0.060px;-webkit-text-stroke:0.5px #4f87d8">Đơn hàng</div>
<div class="t" style="left:897px;top:667.02px;font-size:12.5px;font-weight:400;color:#26272c;letter-spacing:0.049px;">08/12/2023</div>
<div class="t" style="left:1047.5px;top:667.02px;font-size:12.5px;font-weight:400;color:#26272c;letter-spacing:0.438px;">28/03/2024</div>
<div class="t" style="left:1197.5px;top:667.02px;font-size:12.5px;font-weight:400;color:#26272c;letter-spacing:0.519px;">52.433<span style="text-decoration:underline;text-underline-offset:0.5px;text-decoration-color:#777a80">d</span></div>
<div class="r" style="left:1352px;top:655px;width:85px;height:38px;overflow:hidden"><div class="t" style="left:0.5px;top:11.75px;font-size:14px;color:#161823;letter-spacing:0.12px">Doanh thu</div><div class="t" style="left:71px;top:13.02px;font-size:12.5px;color:#161823">1<span style="text-decoration:underline;text-underline-offset:0.5px;text-decoration-color:#777a80">d</span></div></div>
<div class="t" style="left:1447.5px;top:667.14px;font-size:14.6px;font-weight:400;color:#449794;letter-spacing:0.068px;-webkit-text-stroke:0.45px #449794">Xem chi tiết</div>
<div class="r" style="left:584.6px;top:468.0px;width:20.65px;height:20.8px;background:#f8f9f9"></div>
<div class="r" style="left:604.75px;top:468.0px;width:20.65px;height:20.8px;background:#f6f8f8"></div>
<div class="r" style="left:624.9px;top:468.0px;width:20.65px;height:20.8px;background:#f3f7f8"></div>
<div class="r" style="left:645.05px;top:468.0px;width:20.65px;height:20.8px;background:#f6f8f8"></div>
<div class="r" style="left:665.2px;top:468.0px;width:20.65px;height:20.8px;background:#f7f8f8"></div>
<div class="r" style="left:685.35px;top:468.0px;width:20.65px;height:20.8px;background:#f7f8f8"></div>
<div class="r" style="left:705.5px;top:468.0px;width:10.5px;height:20.8px;background:#f8f9f9"></div>
<div class="r" style="left:584.6px;top:488.3px;width:20.65px;height:20.8px;background:#f8f9f9"></div>
<div class="r" style="left:604.75px;top:488.3px;width:20.65px;height:20.8px;background:#f3f5f5"></div>
<div class="r" style="left:624.9px;top:488.3px;width:20.65px;height:20.8px;background:#f2f5f5"></div>
<div class="r" style="left:645.05px;top:488.3px;width:20.65px;height:20.8px;background:#f1f4f4"></div>
<div class="r" style="left:665.2px;top:488.3px;width:20.65px;height:20.8px;background:#f1f4f4"></div>
<div class="r" style="left:685.35px;top:488.3px;width:20.65px;height:20.8px;background:#f3f5f5"></div>
<div class="r" style="left:705.5px;top:488.3px;width:10.5px;height:20.8px;background:#f4f6f6"></div>
<div class="r" style="left:584.6px;top:508.6px;width:20.65px;height:20.8px;background:#fdfdfd"></div>
<div class="r" style="left:604.75px;top:508.6px;width:20.65px;height:20.8px;background:#fdfdfd"></div>
<div class="r" style="left:624.9px;top:508.6px;width:20.65px;height:20.8px;background:#fdfdfd"></div>
<div class="r" style="left:645.05px;top:508.6px;width:20.65px;height:20.8px;background:#fdfdfd"></div>
<div class="r" style="left:665.2px;top:508.6px;width:20.65px;height:20.8px;background:#fdfdfd"></div>
<div class="r" style="left:685.35px;top:508.6px;width:20.65px;height:20.8px;background:#fdfdfd"></div>
<div class="r" style="left:705.5px;top:508.6px;width:10.5px;height:20.8px;background:#fdfdfd"></div>
<div class="r" style="left:584.6px;top:528.9px;width:20.65px;height:20.8px;background:#f3f5f5"></div>
<div class="r" style="left:604.75px;top:528.9px;width:20.65px;height:20.8px;background:#e9eeee"></div>
<div class="r" style="left:624.9px;top:528.9px;width:20.65px;height:20.8px;background:#e9eeee"></div>
<div class="r" style="left:645.05px;top:528.9px;width:20.65px;height:20.8px;background:#e8eded"></div>
<div class="r" style="left:665.2px;top:528.9px;width:20.65px;height:20.8px;background:#e8eded"></div>
<div class="r" style="left:685.35px;top:528.9px;width:20.65px;height:20.8px;background:#e9eeee"></div>
<div class="r" style="left:705.5px;top:528.9px;width:10.5px;height:20.8px;background:#f6f7f7"></div>
<div class="r" style="left:584.6px;top:549.2px;width:20.65px;height:20.8px;background:#fdfdfd"></div>
<div class="r" style="left:604.75px;top:549.2px;width:20.65px;height:20.8px;background:#fcfcfc"></div>
<div class="r" style="left:624.9px;top:549.2px;width:20.65px;height:20.8px;background:#fcfcfc"></div>
<div class="r" style="left:645.05px;top:549.2px;width:20.65px;height:20.8px;background:#fcfcfc"></div>
<div class="r" style="left:665.2px;top:549.2px;width:20.65px;height:20.8px;background:#fcfcfc"></div>
<div class="r" style="left:685.35px;top:549.2px;width:20.65px;height:20.8px;background:#fcfcfc"></div>
<div class="r" style="left:705.5px;top:549.2px;width:10.5px;height:20.8px;background:#fdfdfd"></div>
<div class="r" style="left:584.6px;top:569.5px;width:20.65px;height:20.8px;background:#f5f6f6"></div>
<div class="r" style="left:604.75px;top:569.5px;width:20.65px;height:20.8px;background:#eef1f1"></div>
<div class="r" style="left:624.9px;top:569.5px;width:20.65px;height:20.8px;background:#eef1f1"></div>
<div class="r" style="left:645.05px;top:569.5px;width:20.65px;height:20.8px;background:#edf1f1"></div>
<div class="r" style="left:665.2px;top:569.5px;width:20.65px;height:20.8px;background:#eef1f1"></div>
<div class="r" style="left:685.35px;top:569.5px;width:20.65px;height:20.8px;background:#eef1f1"></div>
<div class="r" style="left:705.5px;top:569.5px;width:10.5px;height:20.8px;background:#f1f3f3"></div>
<div class="r" style="left:584.6px;top:589.8px;width:20.65px;height:20.8px;background:#fcfcfc"></div>
<div class="r" style="left:604.75px;top:589.8px;width:20.65px;height:20.8px;background:#fafbfb"></div>
<div class="r" style="left:624.9px;top:589.8px;width:20.65px;height:20.8px;background:#fafbfb"></div>
<div class="r" style="left:645.05px;top:589.8px;width:20.65px;height:20.8px;background:#fafbfb"></div>
<div class="r" style="left:665.2px;top:589.8px;width:20.65px;height:20.8px;background:#fafbfb"></div>
<div class="r" style="left:685.35px;top:589.8px;width:20.65px;height:20.8px;background:#fafbfb"></div>
<div class="r" style="left:705.5px;top:589.8px;width:10.5px;height:20.8px;background:#fcfcfc"></div>
<div class="r" style="left:584.6px;top:610.1px;width:20.65px;height:20.8px;background:#fdfdfd"></div>
<div class="r" style="left:604.75px;top:610.1px;width:20.65px;height:20.8px;background:#fdfdfd"></div>
<div class="r" style="left:624.9px;top:610.1px;width:20.65px;height:20.8px;background:#fdfdfd"></div>
<div class="r" style="left:645.05px;top:610.1px;width:20.65px;height:20.8px;background:#fdfdfd"></div>
<div class="r" style="left:665.2px;top:610.1px;width:20.65px;height:20.8px;background:#fdfdfd"></div>
<div class="r" style="left:685.35px;top:610.1px;width:20.65px;height:20.8px;background:#fdfdfd"></div>
<div class="r" style="left:705.5px;top:610.1px;width:10.5px;height:20.8px;background:#fdfdfd"></div>
<div class="r" style="left:584.6px;top:630.4px;width:20.65px;height:20.8px;background:#f3f5f5"></div>
<div class="r" style="left:604.75px;top:630.4px;width:20.65px;height:20.8px;background:#e9eeee"></div>
<div class="r" style="left:624.9px;top:630.4px;width:20.65px;height:20.8px;background:#e8eded"></div>
<div class="r" style="left:645.05px;top:630.4px;width:20.65px;height:20.8px;background:#e8eded"></div>
<div class="r" style="left:665.2px;top:630.4px;width:20.65px;height:20.8px;background:#e9eeee"></div>
<div class="r" style="left:685.35px;top:630.4px;width:20.65px;height:20.8px;background:#e9eeee"></div>
<div class="r" style="left:705.5px;top:630.4px;width:10.5px;height:20.8px;background:#f2f4f4"></div>
<div class="r" style="left:584.6px;top:650.7px;width:20.65px;height:20.8px;background:#fdfdfd"></div>
<div class="r" style="left:604.75px;top:650.7px;width:20.65px;height:20.8px;background:#fcfcfc"></div>
<div class="r" style="left:624.9px;top:650.7px;width:20.65px;height:20.8px;background:#fcfcfc"></div>
<div class="r" style="left:645.05px;top:650.7px;width:20.65px;height:20.8px;background:#fcfcfc"></div>
<div class="r" style="left:665.2px;top:650.7px;width:20.65px;height:20.8px;background:#fcfcfc"></div>
<div class="r" style="left:685.35px;top:650.7px;width:20.65px;height:20.8px;background:#fcfcfc"></div>
<div class="r" style="left:705.5px;top:650.7px;width:10.5px;height:20.8px;background:#fdfdfd"></div>
<div class="r" style="left:584.6px;top:671.0px;width:20.65px;height:20.3px;background:#f3f5f5"></div>
<div class="r" style="left:604.75px;top:671.0px;width:20.65px;height:20.3px;background:#e8eded"></div>
<div class="r" style="left:624.9px;top:671.0px;width:20.65px;height:20.3px;background:#e8eded"></div>
<div class="r" style="left:645.05px;top:671.0px;width:20.65px;height:20.3px;background:#e8eded"></div>
<div class="r" style="left:665.2px;top:671.0px;width:20.65px;height:20.3px;background:#e8eded"></div>
<div class="r" style="left:685.35px;top:671.0px;width:20.65px;height:20.3px;background:#e8eded"></div>
<div class="r" style="left:705.5px;top:671.0px;width:10.5px;height:20.3px;background:#f1f3f3"></div>
<div class="r" style="left:1175px;top:720px;width:25.5px;height:24px;background:#f8f8f8;border-radius:4px"></div>
<svg class="r" style="left:1183px;top:726px" width="10" height="12" viewBox="0 0 10 12"><path d="M6.5 1.5 L2.5 6 L6.5 10.5" fill="none" stroke="#b5b6ba" stroke-width="1.3"/></svg>
<div class="r" style="left:1209px;top:720px;width:24px;height:24px;border:1px solid #449794;border-radius:4px;box-sizing:border-box;background:#fff"></div>
<div class="t" style="left:1209px;top:726.42px;width:24px;text-align:center;font-size:12.5px;font-weight:700;color:#161823">1</div>
<div class="r" style="left:1241px;top:720px;width:24px;height:24px;background:#f2f2f2;border-radius:4px"></div>
<div class="t" style="left:1241px;top:726.42px;width:24px;text-align:center;font-size:12.5px;font-weight:700;color:#161823">2</div>
<div class="r" style="left:1273px;top:720px;width:24px;height:24px;background:#f2f2f2;border-radius:4px"></div>
<div class="t" style="left:1273px;top:726.42px;width:24px;text-align:center;font-size:12.5px;font-weight:700;color:#161823">3</div>
<div class="r" style="left:1305px;top:720px;width:24px;height:24px;background:#f2f2f2;border-radius:4px"></div>
<div class="t" style="left:1305px;top:726.42px;width:24px;text-align:center;font-size:12.5px;font-weight:700;color:#161823">4</div>
<div class="r" style="left:1337px;top:720px;width:24px;height:24px;background:#f2f2f2;border-radius:4px"></div>
<div class="t" style="left:1337px;top:726.42px;width:24px;text-align:center;font-size:12.5px;font-weight:700;color:#161823">5</div>
<div class="r" style="left:1369px;top:720px;width:24px;height:24px;background:#f8f8f8;border-radius:4px"></div>
<div class="r" style="left:1376.5px;top:731px;width:2px;height:2px;background:#b5b6ba;border-radius:1px"></div>
<div class="r" style="left:1380.5px;top:731px;width:2px;height:2px;background:#b5b6ba;border-radius:1px"></div>
<div class="r" style="left:1384.5px;top:731px;width:2px;height:2px;background:#b5b6ba;border-radius:1px"></div>
<div class="r" style="left:1401px;top:720px;width:25px;height:24px;background:#f2f2f2;border-radius:4px"></div>
<div class="t" style="left:1401px;top:726.42px;width:25px;text-align:center;font-size:12.5px;font-weight:700;color:#161823">32</div>
<div class="r" style="left:1434px;top:720px;width:25.5px;height:24px;background:#f2f2f2;border-radius:4px"></div>
<svg class="r" style="left:1442px;top:726px" width="10" height="12" viewBox="0 0 10 12"><path d="M3.5 1.5 L7.5 6 L3.5 10.5" fill="none" stroke="#45474d" stroke-width="1.3"/></svg>
<div class="r" style="left:1478px;top:720px;width:86.5px;height:24px;background:#f2f2f2;border-radius:4px"></div>
<div class="t" style="left:1487.8px;top:725.95px;font-size:14px;font-weight:400;color:#161823;">5/Trang</div>
<svg class="r" style="left:1542px;top:728px" width="12" height="9" viewBox="0 0 12 9"><path d="M1.5 2 L6 6.5 L10.5 2" fill="none" stroke="#45474d" stroke-width="1.3"/></svg>
<div class="r" style="left:1705px;top:824px;width:181px;height:50px;border-radius:25px;background:#fff;box-shadow:0 5px 16px rgba(0,0,0,0.1)"></div>
<svg class="r" style="left:1815px;top:868px" width="48" height="22" viewBox="0 0 48 22"><path d="M0 0 H46 V5.6 C43 6 37 8.5 31.3 18.4 C25.5 10.5 15 6.2 3 6.2 L0 6.2 Z" fill="#fff"/></svg>
<div class="t" style="left:1729px;top:843.62px;font-size:16.4px;font-weight:400;color:#161823;">Bạn cần trợ giúp?</div>
<div class="r" style="left:1872px;top:831px;width:20px;height:20px;border-radius:10px;background:#f4f4f4"></div>
<svg class="r" style="left:1877px;top:836px" width="10" height="10" viewBox="0 0 10 10"><path d="M2 2 L8 8 M8 2 L2 8" stroke="#45474d" stroke-width="1.2"/></svg>
<div class="r" style="left:1776px;top:889px;width:48px;height:36px;border-radius:18px;background:#479795;box-shadow:0 4px 12px rgba(0,0,0,0.12)"></div>
<svg class="r" style="left:1789px;top:898px" width="22" height="19" viewBox="0 0 22 19"><path d="M9 1 C4.3 1 0.8 3.8 0.8 7.5 C0.8 11.2 4.3 14 9 14 L9.5 14 L10.5 17.5 L13 13.5 C16 12.5 17.2 10.2 17.2 7.5 C17.2 3.8 13.7 1 9 1 Z" fill="#fff"/><circle cx="5.6" cy="7.6" r="1" fill="#4d5f5e"/><circle cx="9" cy="7.6" r="1" fill="#4d5f5e"/><circle cx="12.4" cy="7.6" r="1" fill="#4d5f5e"/></svg>
<div class="r" style="left:1848px;top:881px;width:48px;height:48px;border-radius:24px;background:#fff;box-shadow:0 4px 14px rgba(0,0,0,0.12)"></div>
<svg class="r" style="left:1848px;top:881px" width="48" height="48" viewBox="0 0 48 48"><path d="M16.6 21 a1.3 1.3 0 0 1 2.6 0 V18.2 a1.4 1.4 0 0 1 2.8 0 V16.4 a1.3 1.3 0 0 1 2.6 0 V17.6 a1.4 1.4 0 0 1 2.8 0 V26.4 L30.6 24.8 a1.4 1.4 0 0 1 2 2 L28.6 31 C27 33.3 25 34.3 22.4 34.3 C19 34.3 16.6 31.5 16.6 28 Z M19.2 21 V25 M22 18.2 V24.6 M24.6 16.4 V24.6" fill="none" stroke="#161823" stroke-width="1.15" stroke-linejoin="round" stroke-linecap="round"/></svg>
</body></html>
